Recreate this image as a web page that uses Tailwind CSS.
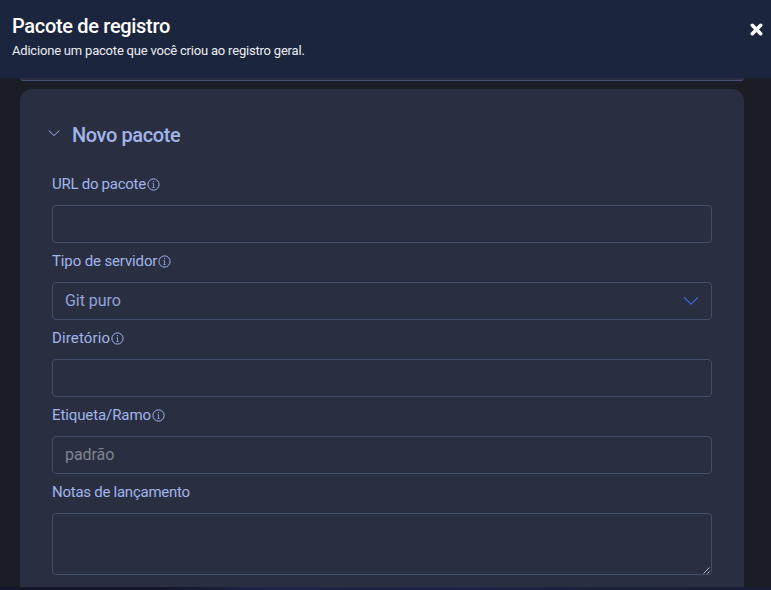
<!DOCTYPE html>
<html lang="pt-BR">
<head>
<meta charset="utf-8">
<title>Pacote de registro</title>
<script src="https://cdn.jsdelivr.net/npm/@tailwindcss/browser@4"></script>
</head>
<body class="h-[590px] w-[771px] overflow-hidden bg-[#1a1d26] font-['Roboto','Liberation_Sans',sans-serif] text-[#a1b5eb]">
<svg class="hidden">
  <symbol id="info" viewBox="0 0 13 13"><circle cx="6.5" cy="6.5" r="5.6" fill="none" stroke="currentColor"/><path d="M5.6 5.5h.9v4M5.5 9.5h2" fill="none" stroke="currentColor" stroke-width=".8"/><circle cx="6.5" cy="3.6" r=".6" fill="currentColor"/></symbol>
</svg>
<div class="flex h-full flex-col">
  <header class="flex h-[78px] shrink-0 items-start justify-between bg-[#1b253d] pl-3 pr-2 text-white">
    <div class="pt-[13px]">
      <h1 class="h-[26px] whitespace-nowrap text-[20px] leading-[26px] font-medium tracking-[-0.32px]">Pacote de registro</h1>
      <p class="h-[22px] whitespace-nowrap text-[13px] leading-[23px] tracking-[-0.2px] text-[#eceef3]">Adicione um pacote que você criou ao registro geral.</p>
    </div>
    <button class="mt-[23px]" aria-label="Fechar"><svg class="block h-[13px] w-[13px]" viewBox="0 0 13 13"><path d="M2.3 2.3l8.4 8.4M10.7 2.3l-8.4 8.4" stroke="currentColor" stroke-width="3.5" stroke-linecap="round"/></svg></button>
  </header>
  <main class="flex min-h-0 flex-1 flex-col overflow-hidden pl-5 pr-[27px]">
    <div class="h-[3px] shrink-0 rounded-b-[3px] border-b border-[#42506f] bg-[#2a2e41]"></div>
    <section class="mt-2 flex min-h-0 flex-1 flex-col rounded-t-[12px] bg-[#2a2e41] px-8">
      <h2 class="-ml-1 mt-8 flex h-7 shrink-0 items-center whitespace-nowrap text-[20px] leading-7 font-medium"><svg class="-mt-0.5 mr-3 h-3 w-3" viewBox="0 0 12 12"><path d="M.7 2.5L6 7.6l5.3-5.1" fill="none" stroke="currentColor"/></svg><span class="tracking-[-0.4px]">Novo pacote</span></h2>
      <label class="mt-[23px] flex h-6 shrink-0 items-center whitespace-nowrap text-[15px]"><span class="tracking-[-0.27px]">URL do pacote</span><svg class="ml-px h-[13px] w-[13px]"><use href="#info"/></svg></label>
      <div class="mt-[9px] h-[38px] shrink-0 rounded border border-[#434e6b]"></div>
      <label class="mt-1.5 flex h-6 shrink-0 items-center whitespace-nowrap text-[15px]"><span class="tracking-[-0.13px]">Tipo de servidor</span><svg class="ml-px h-[13px] w-[13px]"><use href="#info"/></svg></label>
      <div class="mt-[9px] flex h-[38px] shrink-0 items-center justify-between rounded border border-[#434e6b] px-3 text-base text-[#91a4d8]"><span class="tracking-[-0.06px]">Git puro</span><svg class="h-4 w-4" viewBox="0 0 16 16"><path d="M1 4.2l7 7 7-7" fill="none" stroke="#3c62d4" stroke-width="1.3"/></svg></div>
      <label class="mt-1.5 flex h-6 shrink-0 items-center whitespace-nowrap text-[15px]"><span class="tracking-[0.13px]">Diretório</span><svg class="ml-px h-[13px] w-[13px]"><use href="#info"/></svg></label>
      <div class="mt-[9px] h-[38px] shrink-0 rounded border border-[#434e6b]"></div>
      <label class="mt-1.5 flex h-6 shrink-0 items-center whitespace-nowrap text-[15px]"><span class="tracking-[-0.1px]">Etiqueta/Ramo</span><svg class="ml-px h-[13px] w-[13px]"><use href="#info"/></svg></label>
      <div class="mt-[9px] flex h-[38px] shrink-0 items-center rounded border border-[#434e6b] px-3 text-base text-[#80838e]"><span class="tracking-[-0.05px]">padrão</span></div>
      <label class="mt-1.5 flex h-6 shrink-0 items-center whitespace-nowrap text-[15px]"><span class="tracking-[-0.26px]">Notas de lançamento</span></label>
      <div class="mt-[9px] flex h-[62px] shrink-0 items-end justify-end rounded border border-[#434e6b]"><svg class="mr-px h-[7px] w-[7px]" viewBox="0 0 7 7"><path d="M.5 6.5l6-6M4.5 6.5l2-2" stroke="#c8cbd3" stroke-width=".9"/></svg></div>
    </section>
  </main>
  <footer class="h-[3px] shrink-0 bg-gradient-to-r from-[#13152a] from-20% via-[#1d2445] via-35% to-[#191d35]"></footer>
</div>
</body>
</html>
